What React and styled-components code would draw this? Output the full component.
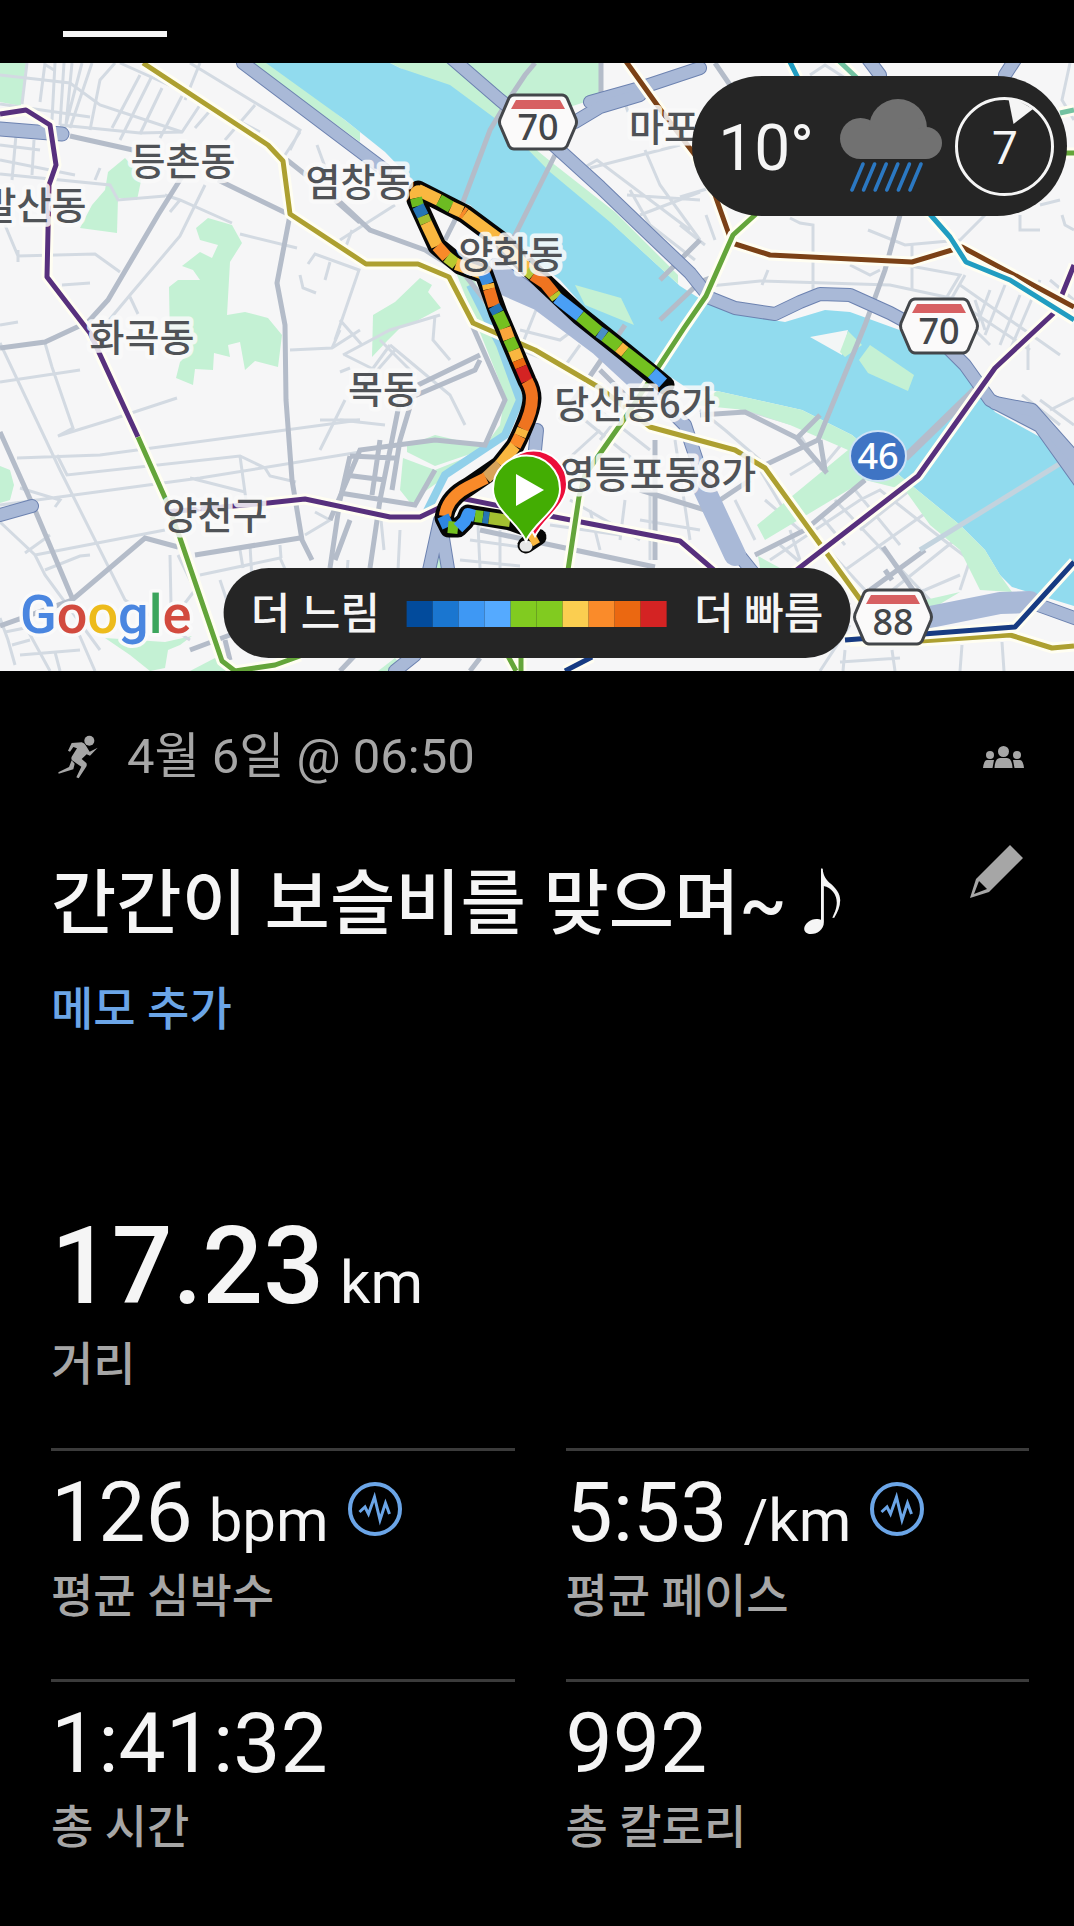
import React from 'react';
import styled, { createGlobalStyle } from 'styled-components';

const paceColors = ['#024b9c', '#1a76d0', '#3e98f4', '#55aaff', '#81cb20', '#81cb20', '#fbce50', '#fa8b2a', '#eb6811', '#d42323'];

const stats = [
    {
        value: '126',
        unit: 'bpm',
        label: '평균 심박수',
        chart: true
    },
    {
        value: '5:53',
        unit: '/km',
        label: '평균 페이스',
        chart: true
    },
    {
        value: '1:41:32',
        label: '총 시간'
    },
    {
        value: '992',
        label: '총 칼로리'
    }
];

const placeLabels = [
    { name: '등촌동', x: 183, y: 175 },
    { name: '염창동', x: 358, y: 196 },
    { name: '발산동', x: 34, y: 219 },
    { name: '화곡동', x: 142, y: 351 },
    { name: '목동', x: 383, y: 403 },
    { name: '양화동', x: 511, y: 268 },
    { name: '당산동6가', x: 635, y: 418 },
    { name: '영등포동8가', x: 658, y: 488 },
    { name: '양천구', x: 215, y: 529 },
    { name: '마포', x: 664, y: 141 }
];

const parks = [
    '0,63 26,63 21,106 0,102',
    '125,158 142,176 137,200 118,198 117,233 80,228 92,205 105,190 108,172',
    '208,218 232,225 242,243 230,262 227,315 245,312 268,318 282,335 278,367 255,361 245,370 240,342 228,345 230,357 214,353 213,370 195,369 193,385 176,378 180,362 192,350 170,340 169,287 178,280 200,280 193,270 182,266 200,252 212,258 218,245 200,240 196,228',
    '373,315 395,302 420,278 432,285 428,292 441,308 415,322 400,328 388,340 372,357',
    '390,63 603,63 601,97 560,110 505,106 497,122 450,92',
    '252,63 272,63 360,132 360,142',
    '0,466 10,470 14,485 10,500 0,503',
    '105,638 165,642 192,636 180,645 168,650 165,668 150,671 130,655',
    '190,671 215,658 230,671',
    '407,446 435,435 482,446 476,452 435,466 407,452',
    '403,458 435,470 480,452 420,495 412,505 400,490',
    '455,270 466,262 500,335 520,400 508,432 482,450 500,425 505,395',
    '435,545 442,525 447,568 433,568',
    '378,671 395,658 405,671',
    '497,118 555,165 615,212 678,275 678,284 610,222 550,172',
    '695,405 717,391 802,410 852,435 905,480 960,525 985,550 1000,575 1012,592 980,590 960,550 930,525 905,490 865,480 765,540 757,525 848,450 790,425 745,410',
    '758,556 780,568 760,568',
    '925,600 960,592 930,610'
];

const islands = [
    { points: '575,285 621,298 634,325 585,305', fill: '#c4f1d4' },
    { points: '810,337 848,330 842,355', fill: '#f3f6f6' },
    { points: '848,331 862,345 845,357 840,352', fill: '#c4f1d4' },
    { points: '859,360 870,345 914,375 908,391 868,373', fill: '#c4f1d4' }
];

const river = 'M266 63 L345 120 L385 152 L420 188 L470 205 L520 250 L560 280 L600 325 L672 378 L690 390 L717 391 L802 410 L852 435 L905 480 L960 525 L985 550 L1000 575 L1012 587 L1074 606 V480 L1040 437 L995 412 L965 375 L945 350 L905 332 L850 312 L825 310 L785 322 L735 314 L705 302 L680 286 L600 212 L500 122 L450 85 L400 68 L390 63 Z';

const minorRoads = [
    'M0 75 L70 83 L100 105 L182 132',
    'M120 63 L180 90 L260 132',
    'M45 63 L40 102 M55 63 L52 120 M64 63 L60 125 M72 63 L66 125 M82 63 L64 132 M92 63 L70 128 M27 63 L22 104 M44 64 L54 70',
    'M115 63 L100 80 L90 130 M140 75 L112 128 M152 76 L120 140 M162 88 L140 134 M182 96 L160 138',
    'M0 104 L90 117 M60 125 L140 133 L182 132 L200 105',
    'M190 63 L300 130 L290 150 M255 105 L225 140 M300 132 L285 155 M200 63 L185 100 M215 105 L195 128',
    'M0 145 L40 150 M0 160 L75 175 M16 135 L12 180 M34 140 L32 175 M0 174 L110 185 L118 200 L165 196',
    'M165 195 L180 200 L232 223 M240 234 L297 248 M100 168 L95 180 M180 200 L170 212',
    'M5 225 L18 256 L95 254 L120 272 M62 285 L90 283 M18 250 L18 262',
    'M205 185 L180 236 L130 295 L105 325 M130 297 L138 314',
    'M308 264 L315 254 L359 270 L335 340 M300 275 L303 288 L316 293 M330 262 L325 280 M317 145 L328 175',
    'M0 382 L80 370 M0 325 L18 322 M45 343 L52 367 L73 428 L58 436 L110 420 L177 398',
    'M0 343 L60 470 L125 600 L190 640 M17 458 L100 455 L360 420 M57 455 L67 475 L240 456 L265 468 L270 476 L296 482',
    'M0 505 L200 478 L360 452 M190 478 L245 492 M240 456 L246 500 M55 507 L60 500 L20 488',
    'M0 522 L35 555 L45 575 L100 650 M25 553 L50 535 M35 555 L165 530 M45 570 L80 556 L90 555',
    'M290 350 L332 348 L360 330 M332 348 L340 330 M345 400 L320 450 M320 420 L360 420',
    'M178 555 L195 590 L172 620 M200 575 L280 558 L290 580 M220 580 L230 610 M170 555 L171 605',
    'M240 550 L243 568 M250 545 L252 580 M315 512 L330 520 L305 535 M280 545 L281 558',
    'M0 618 L8 640 L15 665 M12 645 L30 640 M20 655 L80 650 M22 620 L50 671 M75 625 L95 671 M5 632 L25 628 M55 652 L60 671',
    'M343 355 L390 330 L440 315 M345 355 L375 370 M435 315 L433 340 L450 360',
    'M340 320 L362 345 M380 340 L415 375 M390 345 L450 395 L465 425 M340 240 L395 205 M345 249 L352 230',
    'M340 420 L385 425 M360 390 L395 350 M340 372 L350 368 M352 397 L390 345',
    'M348 560 L345 600 M380 510 L384 550 M400 530 L398 570',
    'M470 540 L520 547 M478 525 L480 568 M500 530 L500 568 M460 560 L520 566 M550 525 L620 535 M570 500 L640 540',
    'M540 300 L520 350 L560 365 M520 330 L560 340 L600 310 M560 305 L595 330 M580 345 L562 370',
    'M560 400 L640 465 M600 430 L545 480 M580 395 L650 450 M625 500 L620 540 M650 490 L650 560 M590 510 L600 550',
    'M640 390 L600 440 M675 440 L690 540 M640 520 L700 530',
    'M580 170 L597 160 L690 230 M590 168 L680 145 M630 190 L650 225 L695 260 M645 150 L660 185 L700 240 M627 195 L700 200 M640 215 L700 192 M625 103 L628 112',
    'M680 197 L720 185 M680 225 L705 245 M706 215 L715 240 M790 218 L800 223 L813 225 L813 290 M700 287 L760 281 L890 285 L960 300',
    'M868 230 L905 245 L960 240 L985 215 M912 245 L912 290 M850 265 L870 275 L880 270 M905 265 L960 275 L945 300 M1040 205 L1060 200',
    'M1020 215 L1020 230 L1040 230 M1070 63 L1062 100 L1074 120 M1062 215 L1065 225 L1074 230 M768 270 L762 285',
    'M960 285 L1060 355 M975 300 L985 330 M990 290 L975 330 L990 345 M1005 285 L985 335 M1020 295 L1000 345 M1040 280 L1010 350 M970 310 L1030 350 M1028 340 L1028 370 M965 275 L945 310 M1050 280 L1074 300',
    'M810 75 L825 65 L845 78',
    'M700 410 L725 430 L760 460 M720 400 L745 410 L865 445 L835 470 M800 435 L815 460 L790 475 M845 440 L820 470 M760 470 L790 520 M765 500 L800 530 M735 500 L755 540',
    'M790 530 L800 560 M770 560 L860 500 L880 490 L950 545 L970 560 L960 590 M835 500 L930 600 M855 490 L900 545 M805 525 L865 590 M780 545 L850 605 M820 515 L845 545',
    'M930 510 L845 570 M955 540 L880 600 M910 490 L860 530 M960 575 L925 590 L880 600 M850 625 L820 671',
    'M1040 400 L1074 425 M1050 410 L1074 398 M1022 395 L1060 425',
    'M845 650 L843 671 M892 650 L895 671 M962 645 L960 671 M1002 642 L1004 671 M840 662 L900 658'
];

const majorRoads = [
    'M70 136 L133 150',
    'M183 175 L158 215 L108 300 L88 322 L45 342 L0 348',
    'M218 180 L290 215 L277 283 L285 325 L286 400 L292 480 L302 540 L312 560',
    'M287 160 L306 175 M335 200 L360 222',
    'M0 432 L35 510 L73 600',
    'M0 626 L72 600 L145 538 L178 547 M195 555 L300 538',
    'M340 202 L370 230 L425 250 L465 275 L500 320',
    'M535 63 L525 75 L505 105 L490 130 L460 210 L445 240',
    'M601 63 L601 95 M715 63 L730 85',
    'M555 155 L515 235 L500 260',
    'M472 325 L505 400 L485 445 L435 440 L360 450 L330 520 M405 400 L475 370 L480 360 M418 385 L480 355',
    'M400 400 L390 450 L380 500 L370 568 M412 400 L400 440 L392 490 M350 456 L395 458 M350 456 L340 500 L330 568 M345 475 L385 480 M340 493 L415 505 L435 470 M380 440 L372 495 M335 560 L350 520',
    'M660 320 L700 282 L718 275 M660 280 L700 240',
    'M625 325 L560 420 M600 370 L640 410 M640 490 L705 510 L750 480 M480 530 L655 567 M655 440 L655 560',
    'M900 215 L885 270 L865 325 L818 440 L765 465 M820 440 L825 470',
    'M865 480 L805 530 L755 555 M820 415 L797 438 L745 412 L700 415 M797 438 L827 473',
    'M883 547 L920 600 M925 550 L870 590 M885 570 L892 580',
    'M190 650 L230 635 M340 671 L360 650 M470 671 L480 658',
    'M225 640 L230 660'
];

const highways = [
    'M243 63 L365 155 L385 170',
    'M448 55 L500 100 L535 128 L600 187 L650 235 L690 273 L710 298 L735 308 L775 314 L800 302 L820 294 L850 295 L890 313 L940 340 L965 365 L990 400 L1040 426 L1080 482',
    'M590 102 L640 88 L700 68',
    'M575 122 L600 107 L640 95',
    'M495 265 L540 297 L600 343 L640 380 L685 425 L710 500 L735 550 L755 575',
    'M925 620 L1000 602 L1030 602 L1080 620',
    'M995 403 L1032 410 L1080 464',
    'M537 430 L533 470',
    'M428 575 L440 520 L449 575',
    'M0 515 L32 506',
    'M865 55 L880 75 M1018 55 L1005 75',
    'M395 671 L415 655'
];

const transitLines = [
    { color: '#ada030', d: 'M143 63 L268 145 L283 161 L290 214 L366 264 L418 264 L449 277 L473 323 L535 350 L600 388 L650 427 L735 450 L765 468 L862 602' },
    { color: '#ada030', d: 'M850 641 L920 641 L1010 635 L1052 648 L1074 646' },
    { color: '#57307d', d: 'M0 114 L26 110 L50 125 L56 165 L49 185 L47 277 L90 333 L138 437' },
    { color: '#64a53a', d: 'M138 437 L166 500 L180 538 L222 661 L235 671 L275 665 L300 656' },
    { color: '#57307d', d: 'M166 512 L268 503 L305 499 L390 517 L420 517 L460 498 L555 517 L680 541 L715 571' },
    { color: '#57307d', d: 'M794 572 L918 476 L995 368 L1055 312 L1074 265' },
    { color: '#7b4116', d: 'M625 60 L660 109 L695 155 L715 195 L732 243 L770 255 L912 262 L962 247 L1074 307' },
    { color: '#64a53a', d: 'M568 570 L579 497 L585 475 L625 418 L684 328 L706 296 L733 235 L756 214' },
    { color: '#219dc1', d: 'M789 60 L798 78 M928 212 L950 237 L966 262 L1010 280 L1074 320' },
    { color: '#73c2a1', d: 'M838 60 L857 78 M1060 113 L1074 110' },
    { color: '#64a53a', d: 'M1064 153 H1074 M508 656 L516 671 M521 656 V671' },
    { color: '#173b82', d: 'M845 640 L1015 627 L1074 562 M565 671 L592 657' }
];

// each piece of the run carries the colour of its pace band
const routePieces = [
    { color: '#f9b740', d: 'M418 190 L439 200' },
    { color: '#6dbb22', d: 'M439 200 L451 207' },
    { color: '#f9b740', d: 'M451 207 L462 212' },
    { color: '#f98a29', d: 'M462 212 L465 214' },
    { color: '#f9b740', d: 'M465 214 L500 240 L532 273' },
    { color: '#b4c83a', d: 'M527 270 L533 275' },
    { color: '#ef7420', d: 'M533 275 L545 283 L554 294' },
    { color: '#b7c92f', d: 'M554 294 L557 298' },
    { color: '#4a9ff5', d: 'M557 298 L580 316' },
    { color: '#74c120', d: 'M580 316 L599 332' },
    { color: '#4a8fc5', d: 'M599 332 L605 336' },
    { color: '#74c120', d: 'M605 336 L619 347' },
    { color: '#f9b740', d: 'M619 347 L625 352' },
    { color: '#74c120', d: 'M625 352 L652 373' },
    { color: '#4a9ff5', d: 'M652 373 L663 383' },
    { color: '#f9b740', d: 'M424 193 Q414 188 416 198' },
    { color: '#6dbb22', d: 'M416 198 L418 206' },
    { color: '#2675b5', d: 'M418 206 L423 216' },
    { color: '#a3bf30', d: 'M423 216 L426 223' },
    { color: '#f9b740', d: 'M426 223 L437 246' },
    { color: '#f98a29', d: 'M437 246 L447 257' },
    { color: '#b7c92f', d: 'M447 257 L456 264' },
    { color: '#f9b740', d: 'M456 264 L484 274' },
    { color: '#3d8fe0', d: 'M484 274 L488 284' },
    { color: '#f9b740', d: 'M488 284 L489 289' },
    { color: '#ef7420', d: 'M489 289 L494 306' },
    { color: '#2675b5', d: 'M494 306 L498 313' },
    { color: '#74c120', d: 'M498 313 L505 328' },
    { color: '#f9a53c', d: 'M505 328 L509 339' },
    { color: '#74c120', d: 'M509 339 L514 350' },
    { color: '#f9b740', d: 'M514 350 L518 360' },
    { color: '#eb6811', d: 'M518 360 L521 367' },
    { color: '#d42323', d: 'M521 367 L527 381' },
    { color: '#ef7420', d: 'M527 381 Q532 390 532 398 Q532 412 523 429' },
    { color: '#f9b740', d: 'M523 429 L520 436' },
    { color: '#f98a29', d: 'M520 436 L515 446' },
    { color: '#f9b740', d: 'M515 446 L500 465' },
    { color: '#d8a35a', d: 'M500 465 L486 478' },
    { color: '#f98a29', d: 'M486 478 L468 487 Q447 498 445 516' },
    { color: '#2e86e0', d: 'M443 516 L448 527' },
    { color: '#74c120', d: 'M448 527 L458 528' },
    { color: '#3d97f3', d: 'M458 528 L465 521 L468 514 L475 516' },
    { color: '#74c120', d: 'M475 516 L483 517' },
    { color: '#2675b5', d: 'M483 517 L489 518' },
    { color: '#a3bf30', d: 'M489 518 L510 521' },
    { color: '#f9b740', d: 'M530 541 L537 537' }
];

const routeOutline = 'M665 385 L625 352 L580 316 L545 283 L500 240 L465 214 L418 190 L416 200 L437 246 L460 265 L484 274 L498 313 L527 381 Q532 390 532 398 Q532 412 515 446 L500 465 L468 487 Q447 498 444 518 L449 528 L458 528 L465 521 L468 514 L510 521 L527 527';

const shields = [
    { number: '70', x: 538, y: 122 },
    { number: '70', x: 939, y: 326 },
    { number: '88', x: 893, y: 617 }
];

const googleLetters = [
    ['G', '#4a86e0'],
    ['o', '#d24a3e'],
    ['o', '#edbb1b'],
    ['g', '#4a86e0'],
    ['l', '#3ba55c'],
    ['e', '#d24a3e']
];

const RouteMap = () => (
    <MapDrawing viewBox="0 63 1074 608" preserveAspectRatio="xMidYMid slice" role="img" aria-label="경로">
        <rect x="-400" y="63" width="1900" height="608" fill="#f6f6f7"/>
        {parks.slice(0, 11).map((points, key) => <polygon key={key} points={points} fill="#c4f1d4"/>)}
        {minorRoads.map((d, key) => <path key={key} d={d} fill="none" stroke="#d3dae2" strokeWidth="3"/>)}
        <path d={river} fill="#91dbee"/>
        {parks.slice(11).map((points, key) => <polygon key={key} points={points} fill="#c4f1d4"/>)}
        <path d="M470 285 L500 345 L520 400 L505 435 L445 475 L425 515" fill="none" stroke="#91d0ea" strokeWidth="8"/>
        {islands.map(item => <polygon key={item.points} points={item.points} fill={item.fill}/>)}
        {majorRoads.map((d, key) => <path key={key} d={d} fill="none" stroke="#b4bcc9" strokeWidth="5"/>)}
        <path d="M905 458 L980 385" fill="none" stroke="#b5bccb" strokeWidth="8"/>
        <path d="M1074 455 L920 550" fill="none" stroke="#c3d3de" strokeWidth="5"/>
        <g fill="none" strokeLinejoin="round" strokeLinecap="round">
            {highways.map(d => <path key={d} d={d} stroke="#6c82b0" strokeWidth="14"/>)}
            {highways.map(d => <path key={d} d={d} stroke="#a9b9d7" strokeWidth="12"/>)}
            <path d="M490 278 L540 300 L600 345 L640 382 M700 480 L735 555 M930 617 L1000 603 L1030 602" stroke="#a9b9d7" strokeWidth="22"/>
            <path d="M0 129 L62 134" stroke="#6c82b0" strokeWidth="15"/>
            <path d="M0 129 L62 134" stroke="#a9b9d7" strokeWidth="13"/>
            {transitLines.map(line => (
                <React.Fragment key={line.d}>
                    <path d={line.d} stroke="#fffef2" strokeWidth="11" strokeLinecap="butt"/>
                    <path d={line.d} stroke={line.color} strokeWidth="5" strokeLinecap="butt"/>
                </React.Fragment>
            ))}
            <path d={routeOutline} stroke="#060606" strokeWidth="19"/>
            <path d="M526 545 L538 537" stroke="#060606" strokeWidth="17"/>
            <path d="M525 546 H527" stroke="#e8e8e8" strokeWidth="11"/>
            {routePieces.map(piece => <path key={piece.d} d={piece.d} stroke={piece.color} strokeWidth="12" strokeLinecap="butt"/>)}
        </g>
        {placeLabels.map(label => <PlaceName key={label.name} x={label.x} y={label.y}>{label.name}</PlaceName>)}
        {shields.map(shield => (
            <g key={`${shield.x}`} transform={`translate(${shield.x} ${shield.y})`}>
                <path d="M-24 -27 H24 Q27 -27 29 -24 L38 -3 Q39 0 38 3 L29 24 Q27 27 24 27 H-24 Q-27 27 -29 24 L-38 3 Q-39 0 -38 -3 L-29 -24 Q-27 -27 -24 -27 Z" fill="#fbfafa" stroke="#43464a" strokeWidth="3"/>
                <path d="M-22 -22 H22 L27 -13 H-27 Z" fill="#d76062"/>
                <RoadNumber y="18">{shield.number}</RoadNumber>
            </g>
        ))}
        <ellipse cx="878" cy="456" rx="28" ry="25" fill="#3f74c4" stroke="#cfe3f6" strokeWidth="2"/>
        <RoadNumber x="878" y="469" $light>46</RoadNumber>
        <path d="M535 536 C526 518 500 506 500 484 A33 33 0 0 1 567 484 C567 506 544 518 535 536 Z" fill="#ec0e3a" stroke="#fff" strokeWidth="2"/>
        <path d="M526 541 C518 522 493 510 493 489 A33 33 0 0 1 560 489 C560 510 534 522 526 541 Z" fill="#43ad03" stroke="#fff" strokeWidth="2"/>
        <path d="M516 474 L544 490 L516 506 Z" fill="#fff"/>
        <GoogleMark x="20" y="633">
            {googleLetters.map(([letter, color], key) => <tspan key={key} fill={color}>{letter}</tspan>)}
        </GoogleMark>
    </MapDrawing>
);

const RainIcon = () => (
    <svg width="102" height="94" viewBox="0 0 102 94" aria-hidden="true">
        <g fill="#717171">
            <circle cx="20.500" cy="39.500" r="20.500"/>
            <circle cx="58" cy="29" r="29"/>
            <circle cx="86" cy="44" r="16"/>
            <rect x="20" y="30" width="66" height="30"/>
        </g>
        {[0, 1, 2, 3, 4, 5].map(i => (
            <path key={i} d={`M${23 + i * 11.6} 65 l-11 26`} stroke="#2b78c2" strokeWidth="3.600" strokeLinecap="round"/>
        ))}
    </svg>
);

const WindCompass = () => (
    <svg width="99" height="99" viewBox="0 0 99 99" aria-label="바람">
        <circle cx="49.500" cy="49.500" r="48" fill="none" stroke="#f5f5f5" strokeWidth="3"/>
        <path d="M53.500 2 L64 4 L78 12 L58.500 27 Z" fill="#f5f5f5"/>
        <WindSpeed x="50" y="67">7</WindSpeed>
    </svg>
);

const RunnerIcon = () => (
    <svg width="42" height="44" viewBox="0 0 124 132" fill="currentColor" aria-hidden="true">
        <circle cx="96" cy="17" r="15"/>
        <path d="M32 47 L43 24 L73 22 Q82 24 86 32 L97 50 L121 38 L98 62 L88 58 L73 72 L87 84 Q90 90 86 96 L64 130 L57 127 L72 95 L44 76 Q40 70 44 64 L59 40 L48 36 L38 50 Z"/>
        <path d="M43 76 L52 86 L48 103 L4 116 L3 112 L35 96 Z"/>
    </svg>
);

const GroupIcon = () => (
    <svg width="41" height="22" viewBox="0 0 41 22" fill="currentColor" aria-hidden="true">
        <circle cx="20.500" cy="5.500" r="5.500"/>
        <circle cx="7" cy="9" r="4"/>
        <circle cx="34" cy="9" r="4"/>
        <path d="M11.500 22 Q12 12 17 12 H24 Q29 12 29.500 22 Z"/>
        <path d="M0 22 Q1 14 4 14 H11 L9.500 22 Z M41 22 Q40 14 37 14 H30 L31.500 22 Z"/>
    </svg>
);

const PencilIcon = () => (
    <svg width="53" height="53" viewBox="0 0 53 53" fill="currentColor" aria-hidden="true">
        <path fillRule="evenodd" d="M40 0 L53 13 L19 47 L0 53 L6 34 Z M9 36 L4 49 L17 44 Z"/>
    </svg>
);

const PulseIcon = () => (
    <svg width="54" height="54" viewBox="-27 -27 54 54" fill="none" stroke="#6ba5e7" aria-hidden="true">
        <circle r="25" strokeWidth="4"/>
        <path d="M-15.500 3 L-10 -2 L-6.500 5 L-.5 -12 L5 11 L10.500 -6 L14.500 5" strokeWidth="3"/>
    </svg>
);

const Stat = ({ item }) => (
    <StatCard>
        <StatLabel>{item.label}</StatLabel>
        <StatValue>
            {item.value}
            {item.unit && <Unit>{item.unit}</Unit>}
            {item.chart && <ChartButton type="button" aria-label={`${item.label} 차트`}><PulseIcon/></ChartButton>}
        </StatValue>
    </StatCard>
);

const App = () => {
    return (
        <Page>
            <GlobalStyle/>
            <TabBar>
                <TabIndicator/>
            </TabBar>
            <MapPanel>
                <RouteMap/>
                <WeatherPill>
                    <Temperature>10°</Temperature>
                    <RainIcon/>
                    <WindCompass/>
                </WeatherPill>
                <PaceLegend>
                    <span>더 느림</span>
                    <PaceScale>
                        {paceColors.map((color, key) => <PaceBand key={key} $color={color}/>)}
                    </PaceScale>
                    <span>더 빠름</span>
                </PaceLegend>
            </MapPanel>
            <Details>
                <DateRow>
                    <RunnerIcon/>
                    <DateText>4월 6일 @ 06:50</DateText>
                    <GroupIcon/>
                </DateRow>
                <TitleRow>
                    <Title>간간이 보슬비를 맞으며~♪</Title>
                    <EditButton type="button" aria-label="제목 편집"><PencilIcon/></EditButton>
                </TitleRow>
                <MemoButton type="button">메모 추가</MemoButton>
                <Distance>
                    <StatLabel>거리</StatLabel>
                    <DistanceValue>
                        17.23
                        <Unit>km</Unit>
                    </DistanceValue>
                </Distance>
                <StatGrid>
                    {stats.map(item => <Stat item={item} key={item.label}/>)}
                </StatGrid>
            </Details>
        </Page>
    );
};

export default App;


const GlobalStyle = createGlobalStyle`
    * {
      box-sizing: border-box;
    }

    body {
      margin: 0;
      background: #000;
    }

    svg {
      display: block;
      flex: none;
    }

    button {
      border: 0;
      padding: 0;
      background: none;
      color: inherit;
      font: inherit;
      cursor: pointer;
    }
`;

const Page = styled.div`
    min-height: 100vh;
    background: #000;
    color: #f5f5f5;
    font-family: Roboto, "Noto Sans CJK KR", sans-serif;
`;

const TabBar = styled.div`
    padding: 31px 63px 26px;
`;

const TabIndicator = styled.div`
    width: 104px;
    height: 6px;
    background: #f5f5f5;
`;

const MapPanel = styled.section`
    position: relative;
    overflow: hidden;
`;

const MapDrawing = styled.svg`
    width: 100%;
    height: 608px;
`;

const PlaceName = styled.text`
    font-family: "Noto Sans CJK KR", sans-serif;
    font-size: 38px;
    font-weight: 500;
    text-anchor: middle;
    fill: #505357;
    stroke: #fafafa;
    stroke-opacity: 0.85;
    stroke-width: 9px;
    stroke-linejoin: round;
    paint-order: stroke;
`;

const RoadNumber = styled.text`
    font-family: "Noto Sans", sans-serif;
    font-size: 36px;
    font-weight: 500;
    text-anchor: middle;
    fill: ${props => props.$light ? '#fff' : '#43464a'};
`;

const GoogleMark = styled.text`
    font-family: Roboto, sans-serif;
    font-size: 54px;
    font-weight: 500;
    stroke: #fafafa;
    stroke-width: 7px;
    stroke-linejoin: round;
    paint-order: stroke;
`;

const WeatherPill = styled.div`
    position: absolute;
    top: 13px;
    right: 7px;
    height: 140px;
    padding: 0 13px 0 26px;
    display: flex;
    align-items: center;
    gap: 13px;
    border-radius: 70px;
    background: #252525;
`;

const Temperature = styled.span`
    margin-right: 13px;
    padding-top: 6px;
    font-size: 64px;
    line-height: 90px;
`;

const WindSpeed = styled.text`
    font-size: 46px;
    text-anchor: middle;
    fill: #f5f5f5;
`;

const PaceLegend = styled.div`
    position: absolute;
    bottom: 13px;
    left: 50%;
    transform: translateX(-50%);
    height: 90px;
    padding: 2px 27px 0;
    display: flex;
    align-items: center;
    gap: 27px;
    border-radius: 45px;
    background: #252525;
    font-size: 43px;
    font-weight: 500;
    line-height: 60px;
    white-space: nowrap;
`;

const PaceScale = styled.div`
    display: flex;
`;

const PaceBand = styled.span`
    width: 26px;
    height: 26px;
    background: ${props => props.$color};
`;

const Details = styled.main`
    padding: 56px 45px 16px 51px;
`;

const DateRow = styled.div`
    display: flex;
    align-items: center;
    gap: 28px;
    padding: 0 5px 0 6px;
    color: #a6a6a6;
`;

const DateText = styled.time`
    flex: 1;
    font-size: 49px;
    line-height: 60px;
`;

const TitleRow = styled.div`
    display: flex;
    justify-content: space-between;
    align-items: flex-start;
    margin-top: 58px;
    padding-right: 6px;
`;

const Title = styled.h1`
    margin: 0;
    padding-top: 14px;
    font-size: 71px;
    font-weight: 500;
    line-height: 90px;
`;

const EditButton = styled.button`
    color: #a6a6a6;
`;

const MemoButton = styled.button`
    display: block;
    margin-top: 30px;
    && {
      color: #6ba5e7;
      font-size: 46px;
      font-weight: 500;
      line-height: 60px;
    }
`;

const Distance = styled.dl`
    display: flex;
    flex-direction: column-reverse;
    gap: 7px;
    margin: 168px 0 54px;
`;

const DistanceValue = styled.dd`
    display: flex;
    align-items: baseline;
    gap: 16px;
    margin: 0;
    font-size: 107px;
    font-weight: 500;
    line-height: 120px;
`;

const StatGrid = styled.div`
    display: grid;
    grid-template-columns: 1fr 1fr;
    column-gap: 51px;
`;

const StatCard = styled.dl`
    display: flex;
    flex-direction: column-reverse;
    gap: 8px;
    margin: 0;
    padding: 17px 0 53px;
    border-top: 3px solid #3b3b3b;
`;

const StatLabel = styled.dt`
    color: #a6a6a6;
    font-size: 46px;
    font-weight: 500;
    line-height: 60px;
`;

const StatValue = styled.dd`
    display: flex;
    align-items: baseline;
    gap: 16px;
    margin: 0;
    font-size: 84px;
    line-height: 90px;
`;

const Unit = styled.span`
    font-size: 60px;
    font-weight: 400;
    line-height: 60px;
`;

const ChartButton = styled.button`
    align-self: flex-start;
    margin: 14px 0 0 3px;
`;
